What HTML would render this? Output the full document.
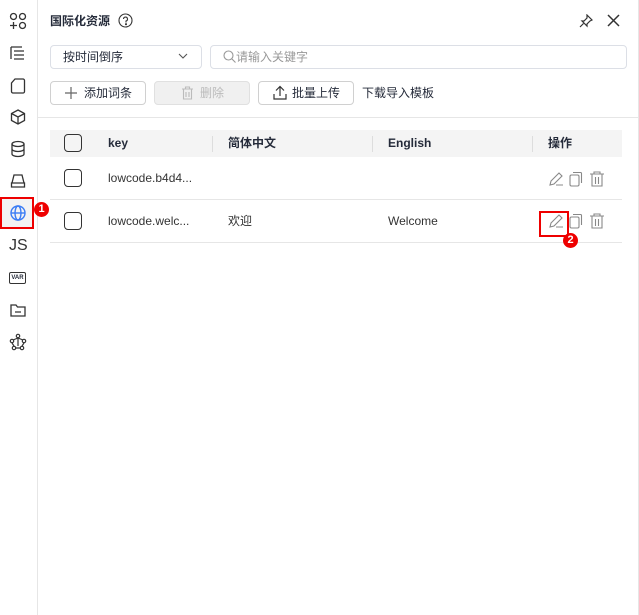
<!DOCTYPE html>
<html><head><meta charset="utf-8"><style>
*{box-sizing:border-box;margin:0;padding:0}
body{width:639px;height:615px;background:#fff;font-family:"Liberation Sans","Noto Sans CJK SC",sans-serif;font-size:12px;line-height:14px;color:#252b3a;position:relative;overflow:hidden}
.side{position:absolute;left:0;top:0;width:38px;height:615px;border-right:1px solid #e6e6e6}
.ic{position:absolute;left:9px;width:18px;height:18px}
.abs{position:absolute;white-space:nowrap}
.box{border:1px solid #dcdfe6;border-radius:4px;position:absolute}
.cb{position:absolute;width:18px;height:18px;border:1.3px solid #333;border-radius:4px}
.red{position:absolute;background:#e00;color:#fff;border-radius:50%;width:15px;height:15px;font-size:11px;font-weight:bold;text-align:center;line-height:15px}
</style></head><body>
<div class="side">
<svg class="ic" style="top:12px" viewBox="0 0 18 18" fill="none" stroke="#333" stroke-width="1.3"><circle cx="4.5" cy="4.5" r="3"/><circle cx="13.5" cy="4.5" r="3"/><circle cx="13.5" cy="13.5" r="3"/><path d="M4.5 10v7M1 13.5h7"/></svg>
<svg class="ic" style="top:44px" viewBox="0 0 18 18" fill="none" stroke="#333" stroke-width="1.3"><path d="M2 3h11M5 7h10M5 11h10M5 15h10M2 3v12"/></svg>
<svg class="ic" style="top:77px" viewBox="0 0 18 18" fill="none" stroke="#333" stroke-width="1.3"><path d="M6 2h8a1.5 1.5 0 0 1 1.5 1.5v11a1.5 1.5 0 0 1-1.5 1.5H4a1.5 1.5 0 0 1-1.5-1.5V6z"/></svg>
<svg class="ic" style="top:108px" viewBox="0 0 18 18" fill="none" stroke="#333" stroke-width="1.3"><path d="M9 2l6.5 3.5v7L9 16l-6.5-3.5v-7zM2.5 5.5L9 9l6.5-3.5M9 9v7"/></svg>
<svg class="ic" style="top:140px" viewBox="0 0 18 18" fill="none" stroke="#333" stroke-width="1.3"><ellipse cx="9" cy="4" rx="6" ry="2.5"/><path d="M3 4v10c0 1.4 2.7 2.5 6 2.5s6-1.1 6-2.5V4M3 9c0 1.4 2.7 2.5 6 2.5s6-1.1 6-2.5"/></svg>
<svg class="ic" style="top:172px" viewBox="0 0 18 18" fill="none" stroke="#333" stroke-width="1.3"><path d="M5 3h8l2 8H3zM2.5 11h13v4h-13z"/></svg>
<div class="abs" style="left:0;top:197px;width:34px;height:32px;border:2px solid #e00;background:#f3f3f3"></div>
<svg class="ic" style="top:204px" viewBox="0 0 18 18" fill="none" stroke="#3a7cf5" stroke-width="1.4"><circle cx="9" cy="9" r="7"/><ellipse cx="9" cy="9" rx="3" ry="7"/><path d="M2 9h14"/></svg>
<div class="red" style="left:34px;top:202px">1</div>
<div class="abs" style="left:9px;top:237px;font-size:16px;line-height:18px;color:#333">JS</div>
<div class="abs" style="left:9px;top:272px;width:17px;height:12px;border:1.2px solid #333;border-radius:2px;font-size:6px;font-weight:bold;text-align:center;line-height:10px">VAR</div>
<svg class="ic" style="top:301px" viewBox="0 0 18 18" fill="none" stroke="#333" stroke-width="1.3"><path d="M2 4h5l1.5 2H16v9H2zM6 11h6"/></svg>
<svg class="ic" style="top:333px" viewBox="0 0 18 18" fill="none" stroke="#333" stroke-width="1.2"><circle cx="9" cy="3" r="1.7"/><circle cx="3" cy="8" r="1.7"/><circle cx="15" cy="8" r="1.7"/><circle cx="5" cy="15" r="1.7"/><circle cx="13" cy="15" r="1.7"/><path d="M9 5l-5 2M9 5l5 2M3 10l2 3M15 10l-2 3M6.5 15h5M9 5v8"/></svg>
</div>
<div class="abs" style="left:50px;top:14px;font-weight:bold;font-size:12px">国际化资源</div>
<svg class="abs" style="left:118px;top:13px" width="15" height="15" viewBox="0 0 15 15" fill="none" stroke="#333" stroke-width="1.1"><circle cx="7.5" cy="7.5" r="6.5"/><path d="M5.5 6a2 2 0 1 1 2.5 2v1.5"/><circle cx="8" cy="11.2" r=".5" fill="#333"/></svg>
<svg class="abs" style="left:579px;top:14px" width="14" height="14" viewBox="0 0 14 14" fill="none" stroke="#333" stroke-width="1.2"><path d="M8 1l5 5-2 1-3 3 0 2-5-5 2 0 3-3zM4.5 9.5L1 13"/></svg>
<svg class="abs" style="left:607px;top:14px" width="13" height="13" viewBox="0 0 13 13" stroke="#333" stroke-width="1.5"><path d="M1 1l11 11M12 1L1 12"/></svg>
<div class="box" style="left:50px;top:45px;width:152px;height:24px"></div>
<div class="abs" style="left:63px;top:50px">按时间倒序</div>
<svg class="abs" style="left:178px;top:53px" width="10" height="7" viewBox="0 0 10 7" fill="none" stroke="#555" stroke-width="1.1"><path d="M1 1l4 4 4-4"/></svg>
<div class="box" style="left:210px;top:45px;width:417px;height:24px"></div>
<svg class="abs" style="left:223px;top:50px" width="13" height="13" viewBox="0 0 13 13" fill="none" stroke="#999" stroke-width="1.1"><circle cx="5.5" cy="5.5" r="4.5"/><path d="M9 9l3.5 3.5"/></svg>
<div class="abs" style="left:236px;top:50px;color:#999">请输入关键字</div>
<div class="box" style="left:50px;top:81px;width:96px;height:24px;border-color:#d0d0d0"></div>
<svg class="abs" style="left:65px;top:87px" width="12" height="12" stroke="#666" stroke-width="1.2"><path d="M6 0v12M0 6h12"/></svg>
<div class="abs" style="left:84px;top:86px">添加词条</div>
<div class="box" style="left:154px;top:81px;width:96px;height:24px;background:#f0f0f0;border-color:#e0e0e0"></div>
<svg class="abs" style="left:181px;top:86px" width="13" height="14" viewBox="0 0 13 14" fill="none" stroke="#bbb" stroke-width="1.1"><path d="M1 3h11M4.5 3V1h4v2M2.5 3v10h8V3M5 6v5M8 6v5"/></svg>
<div class="abs" style="left:200px;top:86px;color:#bbb">删除</div>
<div class="box" style="left:258px;top:81px;width:96px;height:24px;border-color:#d0d0d0"></div>
<svg class="abs" style="left:273px;top:85px" width="14" height="15" viewBox="0 0 14 15" fill="none" stroke="#333" stroke-width="1.2"><path d="M7 11V2M3 5.5L7 1.5l4 4M1 9v5h12V9"/></svg>
<div class="abs" style="left:292px;top:86px">批量上传</div>
<div class="abs" style="left:362px;top:86px">下载导入模板</div>
<div class="abs" style="left:38px;top:117px;width:601px;height:1px;background:#e6e6e6"></div>
<div class="abs" style="left:638px;top:0;width:1px;height:615px;background:#e6e6e6"></div>
<div class="abs" style="left:50px;top:130px;width:572px;height:27px;background:#f4f4f4"></div>
<div class="cb" style="left:64px;top:134px"></div>
<div class="abs" style="left:108px;top:136px;font-weight:bold">key</div>
<div class="abs" style="left:212px;top:136px;width:1px;height:16px;background:#ddd"></div>
<div class="abs" style="left:228px;top:136px;font-weight:bold">简体中文</div>
<div class="abs" style="left:372px;top:136px;width:1px;height:16px;background:#ddd"></div>
<div class="abs" style="left:388px;top:136px;font-weight:bold">English</div>
<div class="abs" style="left:532px;top:136px;width:1px;height:16px;background:#ddd"></div>
<div class="abs" style="left:548px;top:136px;font-weight:bold">操作</div>
<div class="cb" style="left:64px;top:169px"></div>
<div class="abs" style="left:108px;top:171px;color:#333">lowcode.b4d4...</div>
<div class="abs" style="left:50px;top:199px;width:572px;height:1px;background:#e6e6e6"></div>
<div class="cb" style="left:64px;top:212px"></div>
<div class="abs" style="left:108px;top:214px;color:#333">lowcode.welc...</div>
<div class="abs" style="left:228px;top:214px;color:#333">欢迎</div>
<div class="abs" style="left:388px;top:214px;color:#333">Welcome</div>
<div class="abs" style="left:50px;top:242px;width:572px;height:1px;background:#e6e6e6"></div>
<svg class="abs" style="left:548px;top:171px" width="60" height="16" viewBox="0 0 60 16" fill="none" stroke="#888" stroke-width="1.1"><path d="M2 14l1-4 8-8 3 3-8 8zM8 14h7"/><rect x="22" y="4" width="9" height="11" rx="1.5"/><path d="M25 1.5h7.5a1 1 0 0 1 1 1V12"/><path d="M42 3h14M46 3V1h6v2M44 3v12h10V3M47.5 6v7M50.5 6v7"/></svg>
<svg class="abs" style="left:548px;top:213px" width="60" height="16" viewBox="0 0 60 16" fill="none" stroke="#888" stroke-width="1.1"><path d="M2 14l1-4 8-8 3 3-8 8zM8 14h7"/><rect x="22" y="4" width="9" height="11" rx="1.5"/><path d="M25 1.5h7.5a1 1 0 0 1 1 1V12"/><path d="M42 3h14M46 3V1h6v2M44 3v12h10V3M47.5 6v7M50.5 6v7"/></svg>
<div class="abs" style="left:539px;top:211px;width:30px;height:26px;border:2px solid #e00"></div>
<div class="red" style="left:563px;top:233px">2</div>
</body></html>
